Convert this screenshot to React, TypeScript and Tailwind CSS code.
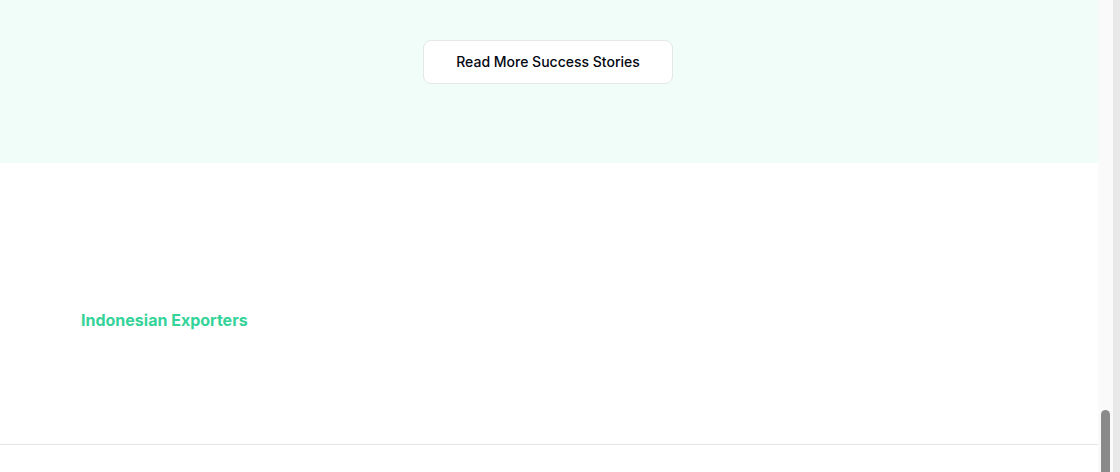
import React from 'react';

const App: React.FC = () => {
  return (
    <div className="flex h-[472px] w-[1120px] overflow-hidden bg-white font-['Inter',sans-serif]">
      <main className="flex-1 flex flex-col">
        <section className="h-[163px] bg-[#f0fdf9] flex justify-center pt-10 pr-[2px]">
          <button
            type="button"
            className="h-11 w-[250px] rounded-lg border border-gray-200 bg-white text-sm font-medium text-gray-950"
          >
            Read More Success Stories
          </button>
        </section>

        <section className="h-[281px] px-[81px] pt-[145px]">
          <h3 className="text-base leading-6 font-bold text-[#34d399]">Indonesian Exporters</h3>
        </section>

        <footer className="flex-1 border-t border-[#e5e5e5] bg-white"></footer>
      </main>

      {/* fake scrollbar */}
      <div className="flex">
        <div className="w-[15px] bg-[#fafafa] flex flex-col justify-end items-center">
          <div className="w-[9px] h-[62px] rounded-t-full bg-[#8a8a8a]"></div>
        </div>
        <div className="w-[7px] bg-[#e8e8e8]"></div>
      </div>
    </div>
  );
};

export default App;
